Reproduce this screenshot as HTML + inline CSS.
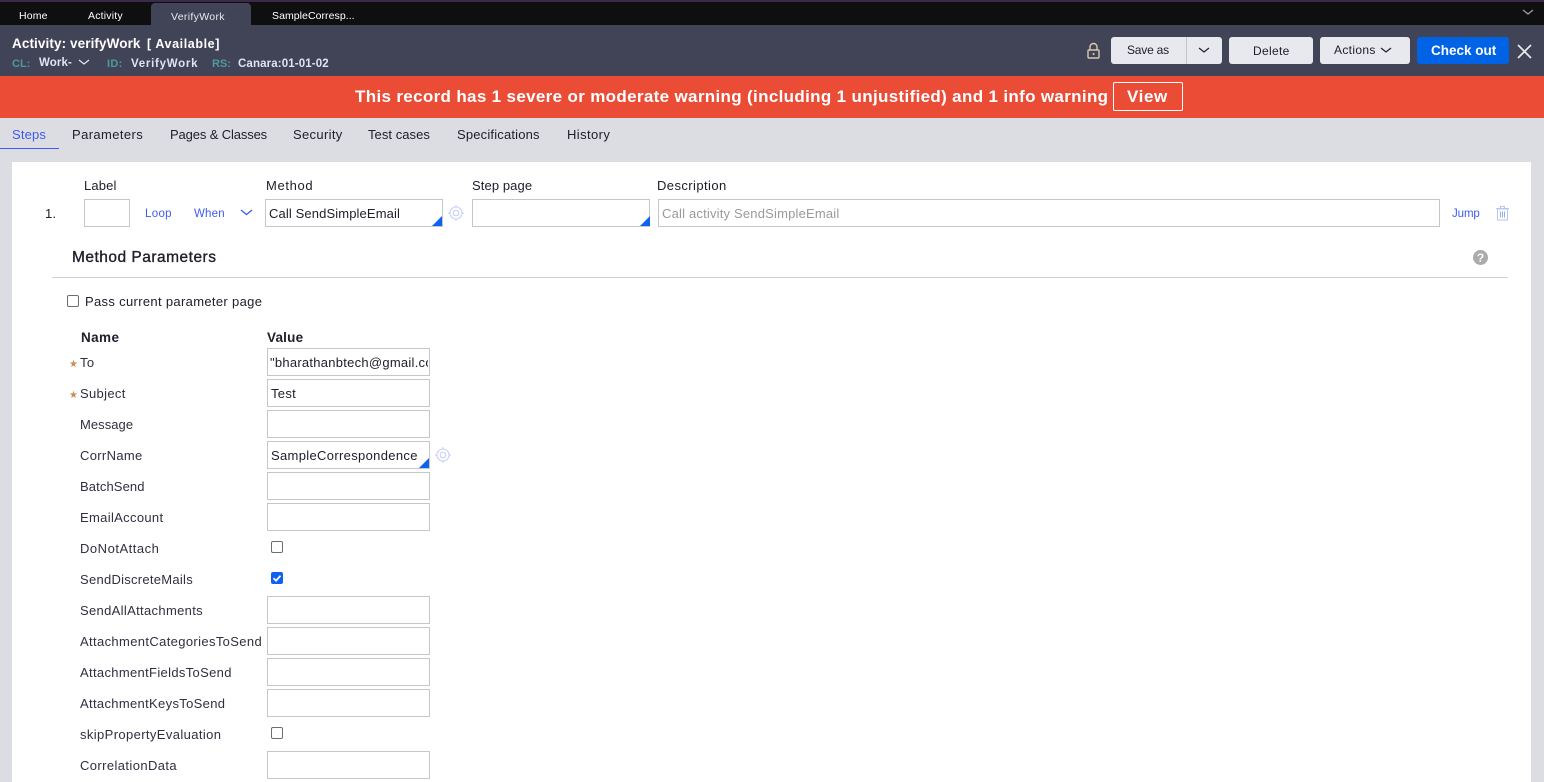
<!DOCTYPE html>
<html lang="en"><head><meta charset="utf-8"><title>Activity: verifyWork</title>
<style>
html,body{margin:0;padding:0}
body{width:1544px;height:782px;overflow:hidden;background:#dcdde2;position:relative;font-family:"Liberation Sans",sans-serif;font-size:13px;color:#20202c}
.a,.t,.b,.i{position:absolute;box-sizing:border-box}
.t{white-space:nowrap;line-height:16px;letter-spacing:.33px;margin-top:1px}
.i{height:28px;border:1px solid #c6c6c6;background:#fff}
.b{background:#e8e9ee;border-radius:3px;top:37px;height:27px}
.c{width:12px;height:12px;border:1px solid #6d6d6d;border-radius:2px;background:#fff;position:absolute;box-sizing:border-box}
.tri{position:absolute;width:0;height:0;border-left:10px solid transparent;border-bottom:10px solid #0f62f0}
.l{color:#2f3040}
.link{color:#3f5bf0;font-size:11.5px}
svg{position:absolute;overflow:visible}
</style></head><body>
<div class="a" style="left:0;top:0;width:1544px;height:2px;background:#3b2a4a"></div>
<div class="a" style="left:0;top:2px;width:1544px;height:23px;background:#0f0f10"></div>
<div class="a" style="left:151px;top:3px;width:100px;height:22px;background:#414357;border-radius:4px 4px 0 0"></div>
<div class="t" style="left:19px;top:7px;color:#fff;font-size:10.5px;letter-spacing:.15px">Home</div>
<div class="t" style="left:88px;top:7px;color:#fff;font-size:10.5px;letter-spacing:.2px">Activity</div>
<div class="t" style="left:171px;top:8px;color:#e8e9ee;font-size:10.5px">VerifyWork</div>
<div class="t" style="left:272px;top:7px;color:#fff;font-size:10.5px;letter-spacing:.06px">SampleCorresp...</div>
<svg style="left:1522px;top:9px" width="12" height="7"><path d="M1 1l5 4 5-4" fill="none" stroke="#9a9aa2" stroke-width="1.3"/></svg>

<div class="a" style="left:0;top:25px;width:1544px;height:51px;background:#414357"></div>
<div class="t" style="left:12px;top:35px;color:#fff;font-weight:bold;font-size:13.5px;letter-spacing:.1px">Activity: verifyWork</div>
<div class="t" style="left:147px;top:35px;color:#fff;font-weight:bold;font-size:12.5px;letter-spacing:.6px">[ Available]</div>
<div class="t" style="left:12px;top:55px;color:#4f9a9f;font-weight:bold;font-size:11px;letter-spacing:0">CL:</div>
<div class="t" style="left:39px;top:54px;color:#dfe3f2;font-weight:bold;font-size:11.5px;letter-spacing:.1px">Work-</div>
<svg style="left:78px;top:59px" width="12" height="7"><path d="M1 1l5 4 5-4" fill="none" stroke="#e8e9ee" stroke-width="1.2"/></svg>
<div class="t" style="left:107px;top:55px;color:#4f9a9f;font-weight:bold;font-size:11px">ID:</div>
<div class="t" style="left:131px;top:55px;color:#dfe3f2;font-weight:bold;font-size:11.5px;letter-spacing:.74px">VerifyWork</div>
<div class="t" style="left:212px;top:55px;color:#4f9a9f;font-weight:bold;font-size:11px;letter-spacing:-.1px">RS:</div>
<div class="t" style="left:238px;top:55px;color:#dfe3f2;font-weight:bold;font-size:11.5px;letter-spacing:.13px">Canara:01-01-02</div>

<svg style="left:1087px;top:43px" width="13" height="16"><path d="M3 7V4a3.500 3.500 0 0 1 7 0v3" fill="none" stroke="#d8c8b0" stroke-width="1.4"/><rect x="1" y="7" width="11" height="8" rx="1" fill="none" stroke="#d8c8b0" stroke-width="1.4"/><rect x="5.700" y="10" width="1.700" height="2" fill="#d8c8b0"/></svg>
<div class="b" style="left:1111px;width:111px"></div>
<div class="a" style="left:1186px;top:37px;width:1px;height:27px;background:#c4c5ca"></div>
<div class="t" style="left:1127px;top:41px;font-size:12px;letter-spacing:-.2px">Save as</div>
<svg style="left:1198px;top:47px" width="12" height="7"><path d="M1 1l5 4 5-4" fill="none" stroke="#20202c" stroke-width="1.2"/></svg>
<div class="b" style="left:1229px;width:84px"></div>
<div class="t" style="left:1253px;top:42px;font-size:12px">Delete</div>
<div class="b" style="left:1320px;width:90px"></div>
<div class="t" style="left:1334px;top:41px;font-size:12px">Actions</div>
<svg style="left:1380px;top:47px" width="12" height="7"><path d="M1 1l5 4 5-4" fill="none" stroke="#20202c" stroke-width="1.2"/></svg>
<div class="b" style="left:1417px;width:92px;background:#0063e6"></div>
<div class="t" style="left:1431px;top:42px;font-size:13.5px;font-weight:bold;color:#fff;letter-spacing:0">Check out</div>
<svg style="left:1517px;top:44px" width="15" height="15"><path d="M1 1l13 13M14 1L1 14" stroke="#e8e9ee" stroke-width="1.7" fill="none"/></svg>

<div class="a" style="left:0;top:76px;width:1544px;height:42px;background:#ea4c36"></div>
<div class="t" style="left:355px;top:87px;color:#fff;font-weight:bold;font-size:17px;letter-spacing:.335px;line-height:18px">This record has 1 severe or moderate warning (including 1 unjustified) and 1 info warning</div>
<div class="a" style="left:1113px;top:82px;width:70px;height:29px;border:1px solid #fff;border-radius:2px"></div>
<div class="t" style="left:1127px;top:87px;color:#fff;font-weight:bold;font-size:17px;letter-spacing:.6px;line-height:18px">View</div>

<div class="t" style="left:12px;top:126px;color:#3f5bf0;letter-spacing:.15px">Steps</div>
<div class="a" style="left:0;top:148px;width:59px;height:1px;background:#3f5bf0"></div>
<div class="t" style="left:72px;top:126px;letter-spacing:.4px">Parameters</div>
<div class="t" style="left:170px;top:126px;letter-spacing:-.13px">Pages &amp; Classes</div>
<div class="t" style="left:293px;top:126px">Security</div>
<div class="t" style="left:368px;top:126px;letter-spacing:.05px">Test cases</div>
<div class="t" style="left:457px;top:126px;letter-spacing:.18px">Specifications</div>
<div class="t" style="left:567px;top:126px;letter-spacing:.4px">History</div>

<div class="a" style="left:12px;top:162px;width:1519px;height:620px;background:#fff"></div>
<div class="t" style="left:84px;top:177px;letter-spacing:.13px">Label</div>
<div class="t" style="left:266px;top:177px;letter-spacing:.65px">Method</div>
<div class="t" style="left:472px;top:177px;letter-spacing:.1px">Step page</div>
<div class="t" style="left:657px;top:177px;letter-spacing:.42px">Description</div>
<div class="t" style="left:45px;top:205px">1.</div>
<div class="i" style="left:84px;top:199px;width:46px"></div>
<div class="t link" style="left:145px;top:205px">Loop</div>
<div class="t link" style="left:194px;top:205px;letter-spacing:.2px">When</div>
<svg style="left:240px;top:209px" width="13" height="7"><path d="M1 1l5.500 4.500L12 1" fill="none" stroke="#3f5bf0" stroke-width="1.3"/></svg>
<div class="i" style="left:265px;top:199px;width:178px"></div>
<div class="t" style="left:269px;top:205px;letter-spacing:.12px">Call SendSimpleEmail</div>
<div class="tri" style="left:432px;top:216px"></div>
<svg style="left:448px;top:205px" width="16" height="16" fill="none" stroke="#c0cdf8" stroke-width="1"><circle cx="8" cy="8" r="6"/><circle cx="8" cy="8" r="2.800"/><path d="M8 0v2M8 14v2M0 8h2M14 8h2"/></svg>
<div class="i" style="left:472px;top:199px;width:178px"></div>
<div class="tri" style="left:640px;top:216px"></div>
<div class="i" style="left:658px;top:199px;width:782px"></div>
<div class="t" style="left:662px;top:205px;color:#9a9a9a;letter-spacing:.19px">Call activity SendSimpleEmail</div>
<div class="t link" style="left:1452px;top:205px;letter-spacing:-.1px">Jump</div>
<svg style="left:1496px;top:206px" width="13" height="15" fill="none" stroke="#b9c6f5" stroke-width="1"><path d="M1.500 3h10v11h-10zM0 2.500h13M4.500 2.500V.5h4v2"/><path d="M4.500 5.500v6M6.500 5.500v6M8.500 5.500v6" stroke="#8fb0ee"/></svg>

<div class="t" style="left:72px;top:249px;font-size:15.500px;font-weight:normal;-webkit-text-stroke:.35px #20202c;letter-spacing:.49px">Method Parameters</div>
<svg style="left:1473px;top:250px" width="15" height="15"><circle cx="7.500" cy="7.500" r="7.500" fill="#ababab"/><text x="7.500" y="12" text-anchor="middle" font-family="Liberation Sans" font-size="12" font-weight="bold" fill="#fff">?</text></svg>
<div class="a" style="left:52px;top:277px;width:1456px;height:1px;background:#cfcfd4"></div>

<div class="c" style="left:67px;top:295px"></div>
<div class="t" style="left:85px;top:293px">Pass current parameter page</div>
<div class="t" style="left:81px;top:329px;font-weight:bold;font-size:13.500px;letter-spacing:.4px">Name</div>
<div class="t" style="left:267px;top:329px;font-weight:bold;font-size:13.500px;letter-spacing:.2px">Value</div>

<div class="t" style="left:69px;top:356px;color:#cf8a50;font-size:10px;letter-spacing:0">★</div>
<div class="t l" style="left:80px;top:354px">To</div>
<div class="i" style="left:267px;top:348px;width:163px"></div>
<div class="a" style="left:270px;top:354px;width:158px;height:18px;overflow:hidden"><div class="t" style="left:0;top:0;letter-spacing:.26px">"bharathanbtech@gmail.com"</div></div>

<div class="t" style="left:69px;top:387px;color:#cf8a50;font-size:10px;letter-spacing:0">★</div>
<div class="t l" style="left:80px;top:385px">Subject</div>
<div class="i" style="left:267px;top:379px;width:163px"></div>
<div class="t" style="left:271px;top:385px;letter-spacing:.3px">Test</div>

<div class="t l" style="left:80px;top:416px;letter-spacing:.05px">Message</div>
<div class="i" style="left:267px;top:410px;width:163px"></div>

<div class="t l" style="left:80px;top:447px">CorrName</div>
<div class="i" style="left:267px;top:441px;width:163px"></div>
<div class="t" style="left:271px;top:447px">SampleCorrespondence</div>
<div class="tri" style="left:419px;top:458px"></div>
<svg style="left:435px;top:447px" width="16" height="16" fill="none" stroke="#c0cdf8" stroke-width="1"><circle cx="8" cy="8" r="6"/><circle cx="8" cy="8" r="2.800"/><path d="M8 0v2M8 14v2M0 8h2M14 8h2"/></svg>

<div class="t l" style="left:80px;top:478px;letter-spacing:.11px">BatchSend</div>
<div class="i" style="left:267px;top:472px;width:163px"></div>
<div class="t l" style="left:80px;top:509px">EmailAccount</div>
<div class="i" style="left:267px;top:503px;width:163px"></div>
<div class="t l" style="left:80px;top:540px;letter-spacing:.52px">DoNotAttach</div>
<div class="c" style="left:271px;top:541px"></div>
<div class="t l" style="left:80px;top:571px;letter-spacing:.27px">SendDiscreteMails</div>
<div class="c" style="left:271px;top:572px;background:#0f62f0;border-color:#0f62f0"></div>
<svg style="left:271px;top:572px" width="12" height="12"><path d="M2.500 6.200l2.500 2.500 4.500-5" fill="none" stroke="#fff" stroke-width="1.800"/></svg>
<div class="t l" style="left:80px;top:602px">SendAllAttachments</div>
<div class="i" style="left:267px;top:596px;width:163px"></div>
<div class="t l" style="left:80px;top:633px;letter-spacing:.36px">AttachmentCategoriesToSend</div>
<div class="i" style="left:267px;top:627px;width:163px"></div>
<div class="t l" style="left:80px;top:664px">AttachmentFieldsToSend</div>
<div class="i" style="left:267px;top:658px;width:163px"></div>
<div class="t l" style="left:80px;top:695px">AttachmentKeysToSend</div>
<div class="i" style="left:267px;top:689px;width:163px"></div>
<div class="t l" style="left:80px;top:726px;letter-spacing:.38px">skipPropertyEvaluation</div>
<div class="c" style="left:271px;top:727px"></div>
<div class="t l" style="left:80px;top:757px;letter-spacing:.4px">CorrelationData</div>
<div class="i" style="left:267px;top:751px;width:163px"></div>
</body></html>
